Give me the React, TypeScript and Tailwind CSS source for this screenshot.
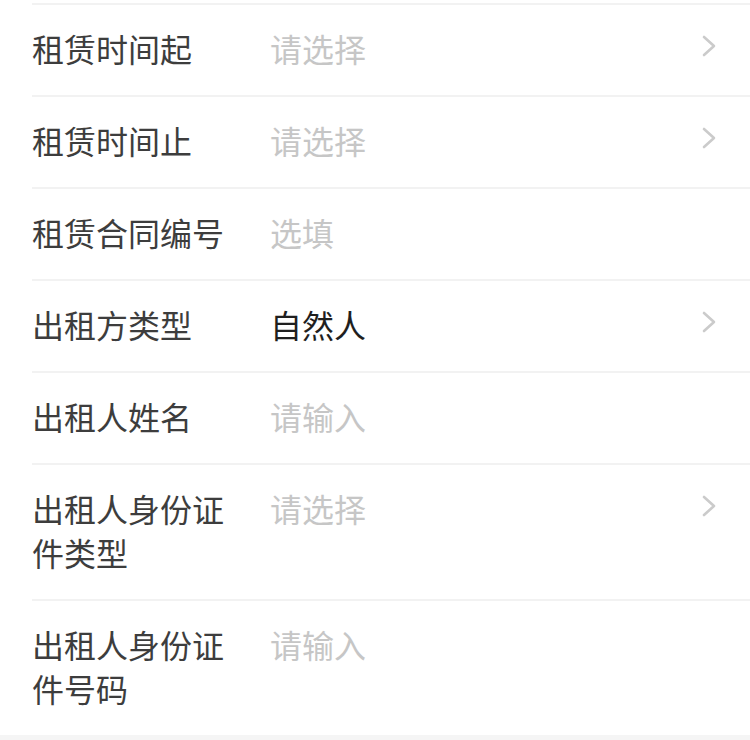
import React from "react";

type Row = { label: string; value: string; filled?: boolean; arrow?: boolean };

const rows: Row[] = [
  { label: "租赁时间起", value: "请选择", arrow: true },
  { label: "租赁时间止", value: "请选择", arrow: true },
  { label: "租赁合同编号", value: "选填" },
  { label: "出租方类型", value: "自然人", filled: true, arrow: true },
  { label: "出租人姓名", value: "请输入" },
  { label: "出租人身份证件类型", value: "请选择", arrow: true },
  { label: "出租人身份证件号码", value: "请输入" },
];

function Chevron() {
  return (
    <svg width="16" height="24" viewBox="0 0 16 24" className="shrink-0">
      <polyline
        points="3,3 13,12 3,21"
        fill="none"
        stroke="#cbcbcb"
        strokeWidth="2.6"
        strokeLinecap="round"
        strokeLinejoin="round"
      />
    </svg>
  );
}

export default function App() {
  return (
    <div
      className="w-[750px] h-[740px] bg-[#f5f5f5] overflow-hidden"
      style={{ fontFamily: '"Noto Sans CJK SC", "Noto Sans", sans-serif' }}
    >
      <div className="bg-white">
        <div className="h-[3px]" />
        {rows.map((r) => (
          <div
            key={r.label}
            className="ml-[32px] border-t-2 border-[#f2f2f2] flex items-start pr-[33px] pt-[21px] pb-[25px]"
          >
            <div className="w-[208px] mr-[30px] shrink-0 text-[32px] leading-[44px] text-[#3d3d3d]">
              {r.label}
            </div>
            <div
              className={`flex-1 text-[32px] leading-[44px] ${
                r.filled ? "text-[#1f1f1f]" : "text-[#c6c6c6]"
              }`}
            >
              {r.value}
            </div>
            {r.arrow && (
              <div className="h-[44px] flex items-center -mt-[2px]">
                <Chevron />
              </div>
            )}
          </div>
        ))}
      </div>
    </div>
  );
}
